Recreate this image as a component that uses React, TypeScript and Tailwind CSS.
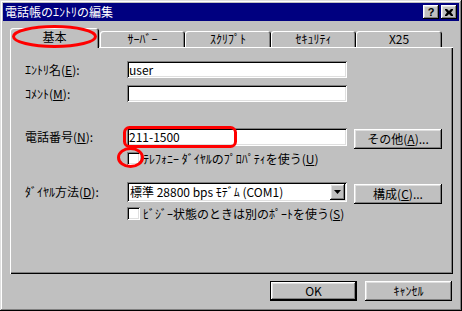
import React from 'react';

const raised =
  'shadow-[inset_-1px_-1px_0_#000,inset_1px_1px_0_#fff,inset_-2px_-2px_0_#808080,inset_2px_2px_0_#dfdfdf]';
const sunken =
  'shadow-[inset_1px_1px_0_#808080,inset_-1px_-1px_0_#fff,inset_2px_2px_0_#000,inset_-2px_-2px_0_#dfdfdf]';

function Mn({ pre, k, post = '' }: { pre: string; k: string; post?: string }) {
  return (
    <span className="whitespace-pre">
      {pre}(<span className="underline underline-offset-[1px]">{k}</span>){post}
    </span>
  );
}

function Button({
  children,
  className = '',
  isDefault = false,
}: {
  children: React.ReactNode;
  className?: string;
  isDefault?: boolean;
}) {
  return (
    <div
      className={`flex items-center justify-center bg-[#c0c0c0] ${raised} ${
        isDefault ? 'border border-black' : ''
      } ${className}`}
    >
      {children}
    </div>
  );
}

function Checkbox() {
  return <div className={`w-[13px] h-[13px] bg-white shrink-0 ${sunken}`} />;
}

function Tab({ label, w }: { label: string; w: string }) {
  return (
    <div
      className={`${w} h-[16px] flex items-center justify-center rounded-t-[3px] shadow-[inset_1px_1px_0_#fff,inset_-1px_0_0_#000,inset_-2px_0_0_#808080]`}
    >
      {label}
    </div>
  );
}

export default function App() {
  return (
    <div className="relative w-[462px] h-[311px] bg-[#c0c0c0] p-[3px] text-[12px] leading-none text-black font-['Noto_Sans_CJK_JP',sans-serif] shadow-[inset_-1px_-1px_0_#000,inset_1px_1px_0_#dfdfdf,inset_-2px_-2px_0_#808080,inset_2px_2px_0_#fff]">
      {/* title bar */}
      <div className="h-[18px] bg-[#000080] flex items-center pl-[2px] pr-[2px]">
        <span className="flex-1 text-white">電話帳のｴﾝﾄﾘの編集</span>
        <div className={`w-[16px] h-[14px] bg-[#c0c0c0] ${raised} flex items-center justify-center`}>
          <span className="font-['Liberation_Sans',sans-serif] font-bold text-[11px] leading-none">?</span>
        </div>
        <div className={`ml-[2px] w-[16px] h-[14px] bg-[#c0c0c0] ${raised} flex items-center justify-center`}>
          <svg width="8" height="7" viewBox="0 0 8 7">
            <path d="M0 0h2l2 2 2-2h2v1L6 3.5 8 6v1H6L4 5 2 7H0V6l2-2.5L0 1z" fill="#000" />
          </svg>
        </div>
      </div>

      <div className="pl-[7px] pt-[7px]">
        {/* tabs */}
        <div className="flex items-end h-[19px]">
          <div className="relative z-10 -mb-px w-[89px] h-[20px] flex items-center justify-center pb-[2px] bg-[#c0c0c0] rounded-t-[3px] shadow-[inset_1px_1px_0_#fff,inset_-1px_0_0_#000,inset_-2px_0_0_#808080]">
            基本
          </div>
          <div className="ml-[1px] flex items-end">
            <Tab label="ｻｰﾊﾞｰ" w="w-[85px]" />
            <Tab label="ｽｸﾘﾌﾟﾄ" w="w-[86px]" />
            <Tab label="ｾｷｭﾘﾃｨ" w="w-[85px]" />
            <Tab label="X25" w="w-[86px]" />
          </div>
        </div>

        {/* panel */}
        <div className="w-[443px] h-[227px] pl-[15px] pt-[14px] shadow-[inset_1px_1px_0_#fff,inset_-1px_-1px_0_#000,inset_-2px_-2px_0_#808080]">
          <div className="flex items-center h-[17px]">
            <div className="w-[102px]">
              <Mn pre="ｴﾝﾄﾘ名" k="E" post=":" />
            </div>
            <div className={`w-[220px] h-[17px] bg-white pl-[2px] flex items-center ${sunken}`}>user</div>
          </div>

          <div className="mt-[7px] flex items-center h-[17px]">
            <div className="w-[102px]">
              <Mn pre="ｺﾒﾝﾄ" k="M" post=":" />
            </div>
            <div className={`w-[220px] h-[17px] bg-white ${sunken}`} />
          </div>

          <div className="mt-[26px] flex items-start">
            <div className="w-[102px] h-[18px] flex items-center">
              <Mn pre="電話番号" k="N" post=":" />
            </div>
            <div className={`w-[220px] h-[18px] bg-white pl-[2px] flex items-center ${sunken}`}>211-1500</div>
            <Button className="ml-[7px] mt-[1px] w-[88px] h-[20px]">
              <Mn pre="その他" k="A" post="..." />
            </Button>
          </div>

          <div className="mt-[3px] ml-[102px] flex items-center h-[13px]">
            <Checkbox />
            <span className="ml-[3px]">
              <Mn pre="ﾃﾚﾌｫﾆｰ ﾀﾞｲﾔﾙのﾌﾟﾛﾊﾟﾃｨを使う" k="U" />
            </span>
          </div>

          <div className="mt-[17px] flex items-start">
            <div className="w-[102px] h-[20px] flex items-center">
              <Mn pre="ﾀﾞｲﾔﾙ方法" k="D" post=":" />
            </div>
            <div className={`w-[220px] h-[20px] bg-white flex items-center pl-[3px] pr-[2px] ${sunken}`}>
              <span className="flex-1 whitespace-pre">標準 28800 bps ﾓﾃﾞﾑ (COM1)</span>
              <div className={`w-[15px] h-[16px] bg-[#c0c0c0] flex items-center justify-center ${raised}`}>
                <svg width="7" height="4" viewBox="0 0 7 4">
                  <path d="M0 0h7L3.5 4z" fill="#000" />
                </svg>
              </div>
            </div>
            <Button className="ml-[7px] mt-[2px] w-[88px] h-[20px]">
              <Mn pre="構成" k="C" post="..." />
            </Button>
          </div>

          <div className="mt-[3px] ml-[102px] flex items-center h-[13px]">
            <Checkbox />
            <span className="ml-[3px]">
              <Mn pre="ﾋﾞｼﾞｰ状態のときは別のﾎﾟｰﾄを使う" k="S" />
            </span>
          </div>
        </div>

        {/* dialog buttons */}
        <div className="mt-[7px] w-[443px] pr-[1px] flex justify-end gap-[8px]">
          <Button isDefault className="w-[87px] h-[20px]">OK</Button>
          <Button className="w-[87px] h-[20px]">ｷｬﾝｾﾙ</Button>
        </div>
      </div>

      {/* red annotation marks */}
      <svg className="absolute left-0 top-0 z-20 pointer-events-none" width="462" height="311">
        <ellipse cx="54.5" cy="36.5" rx="41" ry="10" fill="none" stroke="#f00" strokeWidth="3" />
        <rect x="124.5" y="127.5" width="111" height="19" rx="5" fill="none" stroke="#f00" strokeWidth="3" />
        <ellipse cx="130.5" cy="157.5" rx="12" ry="9" fill="none" stroke="#f00" strokeWidth="3" />
      </svg>
    </div>
  );
}
